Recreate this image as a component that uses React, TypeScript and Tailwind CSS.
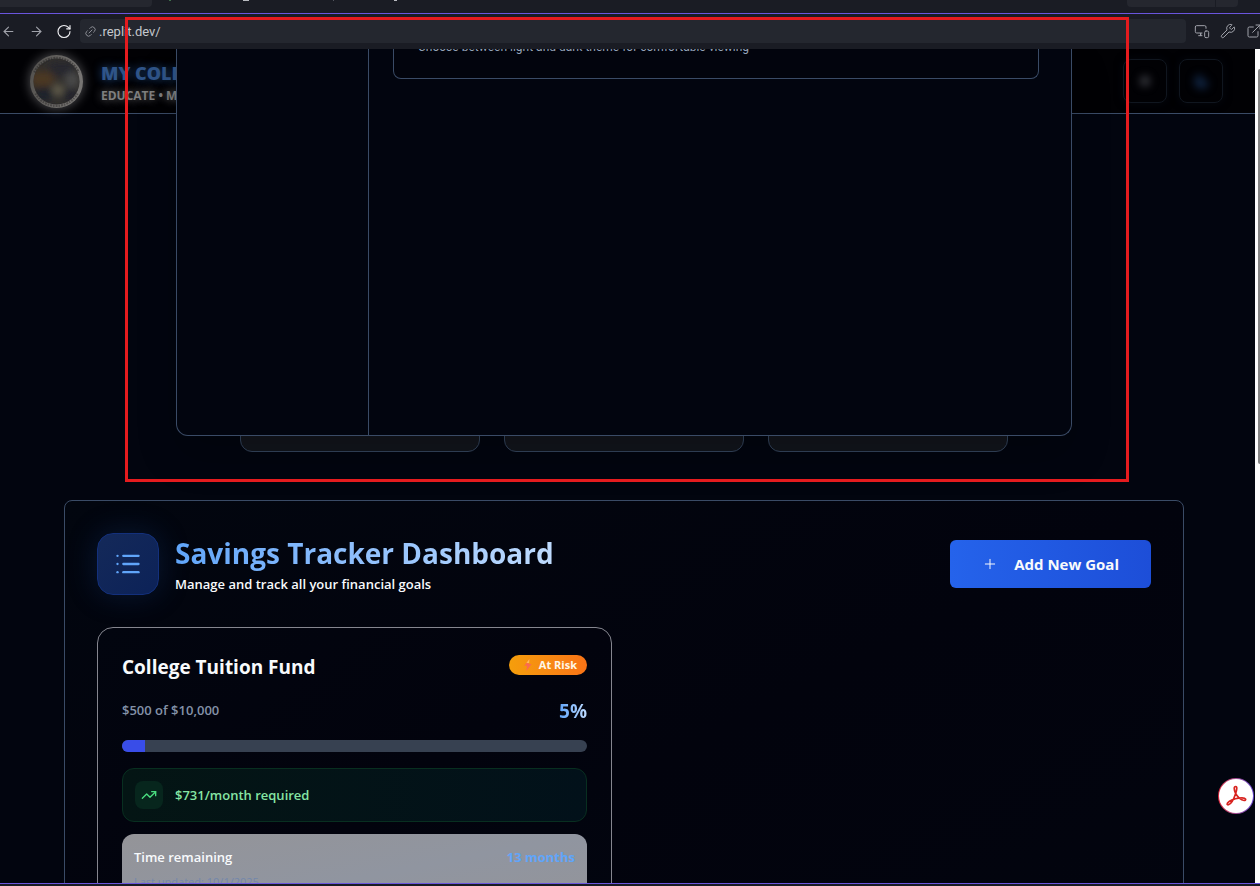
import React from "react";
import { ArrowLeft, ArrowRight, RotateCw, Link2, Wrench, ExternalLink, MonitorSmartphone, List, Plus, TrendingUp, Moon, Sun } from "lucide-react";

function BrowserBar() {
  return (
    <header className="flex-none bg-[#1a1c24]">
      <div className="flex h-[13px] items-start justify-between pr-[22px]">
        <div className="h-[7px] w-[152px] rounded-br bg-[#25272f]" />
        <div className="flex flex-1 items-start pl-[17px]" aria-hidden="true">
          <span className="h-px w-[2px] bg-[#3f6f4b]" />
          <span className="ml-[72px] h-px w-[6px] bg-[#b9bac0]" />
          <span className="ml-[84px] h-px w-px bg-[#53555e]" />
          <span className="ml-[60px] h-px w-[3px] bg-[#b9bac0]" />
        </div>
        <div className="flex gap-px">
          <div className="h-[7px] w-[88px] rounded-bl bg-[#25272f]" />
          <div className="h-[7px] w-[22px] rounded-br bg-[#25272f]" />
        </div>
      </div>
      <div className="h-px bg-[#6a55dd]" />
      <div className="flex h-[35px] items-center pb-px">
        <button aria-label="Back" className="flex w-4 justify-center text-[#a0a2aa]"><ArrowLeft size={15} strokeWidth={1.7} /></button>
        <button aria-label="Forward" className="ml-3 flex w-4 justify-center text-[#a0a2aa]"><ArrowRight size={15} strokeWidth={1.7} /></button>
        <button aria-label="Reload" className="ml-3 flex w-4 justify-center text-[#f0f0f3]"><RotateCw size={17} strokeWidth={1.7} /></button>
        <label className="ml-2 flex h-6 flex-1 items-center gap-[2px] rounded bg-[#24272f] pl-1">
          <Link2 size={13} strokeWidth={1.7} className="flex-none -rotate-45 text-[#8d8f98]" />
          <input aria-label="Address" defaultValue=".replit.dev/" className="w-full bg-transparent pt-px font-['Roboto','Liberation_Sans',sans-serif] text-[13px] text-[#c5c7cd] outline-none" />
        </label>
        <button aria-label="Devices" className="ml-2 text-[#a0a2aa]"><MonitorSmartphone size={16} strokeWidth={1.5} /></button>
        <button aria-label="Developer tools" className="ml-[10px] text-[#a0a2aa]"><Wrench size={16} strokeWidth={1.5} /></button>
        <button aria-label="Open in new tab" className="-mr-[2px] ml-[10px] text-[#a0a2aa]"><ExternalLink size={16} strokeWidth={1.5} /></button>
      </div>
    </header>
  );
}

function Seal() {
  return (
    <svg width="56" height="56" viewBox="0 0 56 56" className="flex-none overflow-visible drop-shadow-[0_0_6px_rgba(190,190,190,0.45)]" role="img" aria-label="College seal">
      <defs>
        <filter id="soft" x="-30%" y="-30%" width="160%" height="160%"><feGaussianBlur stdDeviation="3.5" /></filter>
        <clipPath id="disc"><circle cx="28.500" cy="28.500" r="23" /></clipPath>
        <linearGradient id="rim" x1="0" y1="0" x2="1" y2="0.3"><stop stopColor="#504e4b" /><stop offset="1" stopColor="#777573" /></linearGradient>
      </defs>
      <circle cx="28.500" cy="28.500" r="26.500" fill="url(#rim)" />
      <path d="M6.500 19.500A24 24 0 0 1 50.500 19.500" fill="none" stroke="#2b2a29" strokeWidth="2.600" strokeDasharray="1.500 1.100 2 .9" opacity=".6" />
      <path d="M7.500 40.500A24 24 0 0 0 49.500 40.500" fill="none" stroke="#2b2a29" strokeWidth="2.200" strokeDasharray="1.500 1.100 2 .9" opacity=".5" />
      <g clipPath="url(#disc)">
        <rect x="5" y="5" width="47" height="47" fill="#302e2c" />
        <g filter="url(#soft)">
          <ellipse cx="14" cy="26" rx="13" ry="8" fill="#4c3822" />
          <ellipse cx="34" cy="16" rx="14" ry="7" fill="#25282d" />
          <ellipse cx="44" cy="27" rx="7" ry="8" fill="#4a4a48" />
          <ellipse cx="16" cy="41" rx="11" ry="7" fill="#1c202c" />
          <ellipse cx="42" cy="42" rx="8" ry="7" fill="#20232c" />
          <circle cx="30" cy="37" r="6" fill="#5f5a49" />
        </g>
      </g>
    </svg>
  );
}

function SiteHeader() {
  return (
    <div className="flex h-[65px] items-center justify-between border-b border-[#3a4b66] bg-[#010104] pl-7 pr-8">
      <div className="flex items-center gap-[17px]">
        <Seal />
        <div className="pt-[7px] whitespace-nowrap">
          <div className="text-lg leading-5 font-extrabold text-[#2f5488] [text-shadow:0_0_10px_#234a7c]">MY COLLEGE FINANCE</div>
          <div className="mt-[3px] text-xs leading-5 font-bold text-[#7f7f7f] [text-shadow:0_0_8px_#777]">EDUCATE • MOTIVATE • ELEVATE</div>
        </div>
      </div>
      <div className="flex gap-3">
        <button aria-label="Light theme" className="flex size-11 items-center justify-center rounded-lg border border-[#10161f] text-[#6b6d75] shadow-[0_0_8px_#05080e]"><Sun size={14} fill="currentColor" className="blur-[4px]" /></button>
        <button aria-label="Dark theme" className="flex size-11 items-center justify-center rounded-lg border border-[#10161f] text-[#12294a] shadow-[0_0_8px_#05080e]"><Moon size={17} fill="currentColor" className="blur-[4px]" /></button>
      </div>
    </div>
  );
}

function SettingsDialog() {
  return (
    <div role="dialog" aria-label="Settings" className="absolute top-0 right-[183px] left-[176px] flex h-[387px] overflow-hidden rounded-b-xl border-x border-b border-[#3a4b66] bg-[#02050f] shadow-[0_20px_40px_rgba(0,0,0,0.2)]">
      <div className="w-[192px] flex-none border-r border-[#3a4b66]" />
      <div className="flex-1 pr-8 pl-6">
        <div className="rounded-b-lg border-x border-b border-[#3a4b66] bg-[#02040d] px-6 pb-6">
          <p className="-mt-[9px] font-['Roboto','Open_Sans',sans-serif] text-xs leading-[14px] text-[#94a3b8]">Choose between light and dark theme for comfortable viewing</p>
        </div>
      </div>
    </div>
  );
}

function GoalCard() {
  return (
    <article className="mt-8 h-[400px] w-[515px] max-w-full rounded-2xl border border-[#85868f] bg-linear-to-br from-[#02050f] via-[#02030d] to-[#020610] p-6 pt-[25px]">
      <div className="flex items-start justify-between">
        <h3 className="text-[19px] leading-7 font-bold text-[#f8fafc]">College Tuition Fund</h3>
        <span className="mt-[2px] flex h-5 items-center gap-[6px] rounded-full bg-linear-to-r from-[#f59e0b] to-[#f97316] pr-[10px] pl-[14px] text-[11px] font-bold text-[#fff7e8]">
          <svg width="10" height="12" viewBox="0 0 10 12" aria-hidden="true"><path d="M6.4 0 1.3 6.7h2.8L3.3 12 8.6 5H5.6z" fill="#fb6a50" /><path d="M6.4 0 3.4 4h2.7z" fill="#ffbd58" /></svg>
          At Risk
        </span>
      </div>
      <div className="mt-4 flex h-7 items-start justify-between">
        <span className="pt-[3px] text-[13px] leading-5 font-semibold text-[#8492a8]">$500 of $10,000</span>
        <span className="bg-linear-to-r from-[#60a5fa] to-[#bfdbfe] bg-clip-text text-[19px] leading-7 font-bold text-transparent">5%</span>
      </div>
      <div role="progressbar" aria-label="College Tuition Fund" aria-valuenow={5} className="mt-[15px] h-3 overflow-hidden rounded-full bg-[#374151]">
        <div className="h-full w-[5%] bg-[#394de8]" />
      </div>
      <div className="mt-4 flex h-[54px] items-center gap-3 rounded-xl border border-[#082f20] bg-linear-to-r from-[#041514] to-[#02111a] px-3">
        <span className="flex size-7 items-center justify-center rounded-lg bg-[#07261d] text-[#4ade80]"><TrendingUp size={16} strokeWidth={2} /></span>
        <span className="text-[13px] leading-5 font-semibold text-[#86e5a4]">$731/month required</span>
      </div>
      <div className="mt-3 h-[90px] rounded-xl bg-linear-to-br from-[#949498] via-[#9095a0] to-[#949498] px-3 pt-[13px]">
        <div className="flex items-center justify-between text-[13px] leading-5 font-semibold text-[#f8fafc]">
          <span>Time remaining</span>
          <span className="font-bold text-[#60a5fa]">13 months</span>
        </div>
        <div className="mt-[7px] text-[11px] leading-4 text-[#7387ac]">Last updated: 10/1/2025</div>
      </div>
    </article>
  );
}

export default function App() {
  return (
    <div className="relative flex h-screen flex-col overflow-hidden bg-[#02050f] font-['Open_Sans','Noto_Sans',sans-serif]">
      <BrowserBar />
      <div className="flex min-h-0 flex-1">
        <div className="relative min-w-0 flex-1 overflow-hidden">
          <SiteHeader />
          <main className="pr-[71px] pl-16">
            <div className="mx-auto grid h-[338px] max-w-3xl grid-cols-3 gap-6 pt-[238px]">
              <div className="rounded-xl border border-[#33445c] bg-[#12151c]" />
              <div className="rounded-xl border border-[#33445c] bg-[#12151c]" />
              <div className="rounded-xl border border-[#33445c] bg-[#12151c]" />
            </div>
            <section className="mt-12 rounded-lg border border-[#3a4b66] bg-linear-to-br from-[#02060f] via-[#02030d] to-[#02050f] p-8">
              <div className="flex items-center justify-between">
                <div className="flex items-center gap-4">
                  <span className="flex size-[62px] items-center justify-center rounded-2xl border border-[#13307c] bg-linear-to-br from-[#142959] to-[#0c2258] text-[#60a5fa] shadow-[0_0_30px_rgba(30,80,160,0.25)]"><List size={28} strokeWidth={2} /></span>
                  <div>
                    <h2 className="bg-linear-to-r from-[#60a5fa] to-[#bfdbfe] bg-clip-text text-[28px] leading-9 font-bold text-transparent">Savings Tracker Dashboard</h2>
                    <p className="mt-[3px] text-[13px] leading-5 font-semibold text-[#f8fafc]">Manage and track all your financial goals</p>
                  </div>
                </div>
                <button className="flex h-12 items-center gap-4 rounded-md bg-linear-to-r from-[#2563eb] to-[#1d4ed8] px-8 text-[15px] font-bold text-[#f8fafc]"><Plus size={16} strokeWidth={1.5} />Add New Goal</button>
              </div>
              <GoalCard />
            </section>
          </main>
          <SettingsDialog />
        </div>
        <div aria-hidden="true" className="flex w-[5px] flex-none flex-col bg-[#fcfcfc] pt-5 pl-[3px]">
          <div className="h-[395px] rounded-l bg-[#858585]" />
        </div>
      </div>
      <footer className="h-[3px] flex-none border-t border-[#6a55dd] bg-[#1a1c24]" />
      <button aria-label="Open PDF tools" className="absolute right-[6px] bottom-[72px] flex size-9 items-center justify-center rounded-full bg-linear-to-r from-[#e0263c] to-[#6847d8] p-px">
        <span className="flex size-full items-center justify-center rounded-full bg-white">
          <svg width="22" height="22" viewBox="0 0 22 22" fill="none" stroke="#d8231f" strokeWidth="1.700" aria-hidden="true"><path d="M10.7 1.5c-2 0-1.8 3.2-.2 6.6 1.800 3.800 5.500 7.400 8.500 7.400 2.600 0 2.300-2.700-2-2.700-4.100 0-9.100 1.300-12.500 3.500-3.800 2.400-2.400 4.200-.7 3.300 2-1 5-5.700 6.700-10.700 1.400-4.200 1.900-7.400.2-7.400Z" /></svg>
        </span>
      </button>
      <div aria-hidden="true" className="pointer-events-none absolute top-[17px] right-[131px] left-[125px] h-[465px] border-[3px] border-[#e51b1e]" />
    </div>
  );
}
